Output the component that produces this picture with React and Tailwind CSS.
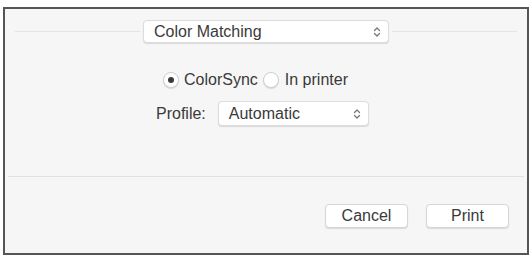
import React from "react";

function Chevrons({ className = "" }) {
  return (
    <svg width="8" height="12" viewBox="0 0 8 12" className={className} fill="none">
      <path d="M1.5 4.5 L4 2 L6.5 4.5" stroke="#777" strokeWidth="1.3" strokeLinecap="round" strokeLinejoin="round" />
      <path d="M1.5 7.5 L4 10 L6.5 7.5" stroke="#777" strokeWidth="1.3" strokeLinecap="round" strokeLinejoin="round" />
    </svg>
  );
}

function Popup({ label, className = "" }) {
  return (
    <div
      className={
        "flex items-center justify-between bg-white rounded-[4px] border border-[#dcdcdc] shadow-[0_1px_1px_rgba(0,0,0,0.12)] pl-[10px] pr-[7px] " +
        className
      }
    >
      <span className="text-[16px] leading-none text-[#3a3a3a]">{label}</span>
      <Chevrons />
    </div>
  );
}

function Radio({ checked }) {
  return (
    <div className="w-[16px] h-[16px] rounded-full bg-white border border-[#cfcfcf] shadow-[0_1px_1px_rgba(0,0,0,0.12)] flex items-center justify-center">
      {checked && <div className="w-[6px] h-[6px] rounded-full bg-[#3a3a3a]" />}
    </div>
  );
}

function Button({ children }) {
  return (
    <div className="w-[83px] h-[24px] bg-white rounded-[4px] border border-[#d6d6d6] shadow-[0_1px_1px_rgba(0,0,0,0.12)] flex items-center justify-center text-[16px] leading-none text-[#3a3a3a]">
      {children}
    </div>
  );
}

export default function App() {
  return (
    <div className="w-[531px] h-[256px] bg-white pt-[7px] pl-[3px]" style={{ fontFamily: '"Liberation Sans", Arial, sans-serif' }}>
      <div className="w-[526px] h-[248px] border-2 border-[#555] bg-[#f6f6f6] flex flex-col">
        <div className="mt-[11px] flex items-center px-[10px] gap-[3px]">
          <div className="flex-1 h-px bg-[#e4e4e4]" />
          <Popup label="Color Matching" className="w-[246px] h-[23px]" />
          <div className="flex-1 h-px bg-[#e4e4e4]" />
        </div>
        <div className="mt-[27px] h-[20px] flex items-center ml-[158px] text-[16px] leading-none text-[#3a3a3a]">
          <Radio checked />
          <span className="ml-[5px]">ColorSync</span>
          <div className="ml-[5px]"><Radio /></div>
          <span className="ml-[6px]">In printer</span>
        </div>
        <div className="mt-[11px] flex items-center ml-[151px]">
          <span className="text-[16px] leading-none text-[#3a3a3a]">Profile:</span>
          <Popup label="Automatic" className="ml-[12px] w-[151px] h-[25px]" />
        </div>
        <div className="mt-[50px] mx-[3px] h-px bg-[#e2e2e2]" />
        <div className="mt-[27px] flex justify-end gap-[18px] pr-[18px]">
          <Button>Cancel</Button>
          <Button>Print</Button>
        </div>
      </div>
    </div>
  );
}
